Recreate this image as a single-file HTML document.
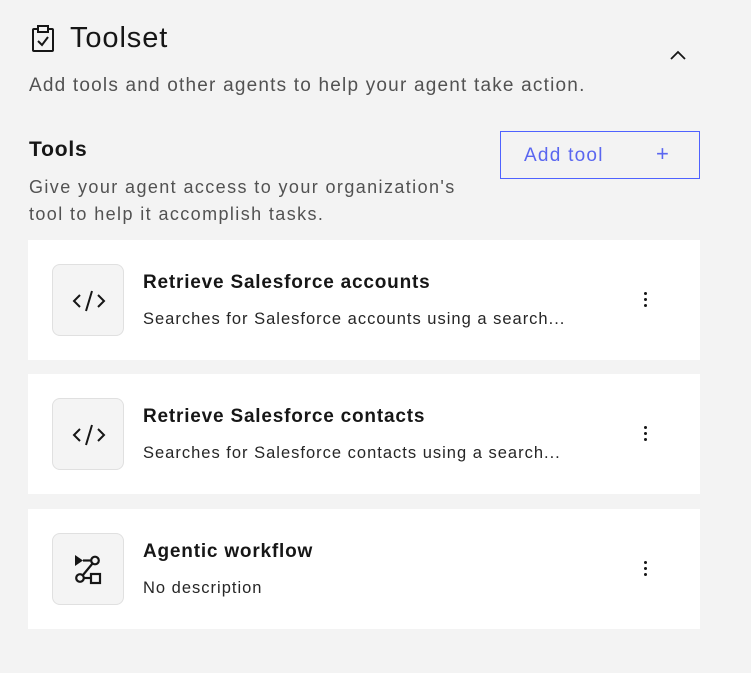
<!DOCTYPE html>
<html><head><meta charset="utf-8"><style>
body{margin:0;width:751px;height:673px;background:#f3f3f3;font-family:"Liberation Sans",sans-serif;color:#161616;position:relative;overflow:hidden}
.a{position:absolute}
.card{position:absolute;left:28px;width:672px;height:120px;background:#fff}
.ib{position:absolute;left:24px;top:24px;width:70px;height:70px;background:#f4f4f4;border:1px solid #e0e0e0;border-radius:8px}
.ib svg{position:absolute;left:19px;top:19px}
.t{position:absolute;left:115px;top:32px;font-size:19px;font-weight:bold;letter-spacing:0.8px}
.d{position:absolute;left:115px;top:70px;font-size:16.5px;color:#262626;letter-spacing:1px}
.k{position:absolute;left:616px;top:52px;width:3px}
.k i{display:block;width:3px;height:3px;border-radius:50%;background:#161616;margin-bottom:3px}
</style></head><body>
<svg class="a" style="left:31px;top:25px" width="24" height="28" viewBox="0 0 24 28" fill="none" stroke="#161616" stroke-width="2"><rect x="2" y="4" width="20" height="22" rx="1"/><rect x="7" y="1" width="10" height="6" fill="#f3f3f3"/><path d="M7 16l4 4 6-8"/></svg>
<div class="a" style="left:70px;top:22px;font-size:29px;letter-spacing:0.9px">Toolset</div>
<svg class="a" style="left:669px;top:50px" width="18" height="10" viewBox="0 0 18 10" fill="none" stroke="#161616" stroke-width="1.8"><path d="M2 9l7-7 7 7"/></svg>
<div class="a" style="left:29px;top:75px;font-size:19px;color:#525252;letter-spacing:1.2px">Add tools and other agents to help your agent take action.</div>
<div class="a" style="left:29px;top:138px;font-size:21px;font-weight:bold;letter-spacing:0.8px">Tools</div>
<div class="a" style="left:29px;top:174px;font-size:18px;color:#525252;line-height:27px;width:470px;letter-spacing:1.4px">Give your agent access to your organization's<br>tool to help it accomplish tasks.</div>
<div class="a" style="left:500px;top:131px;width:198px;height:46px;border:1px solid #4f62ff;color:#5a66f0;font-size:19px"><span class="a" style="left:23px;top:13px;letter-spacing:1.25px;white-space:nowrap">Add tool</span><span class="a" style="left:155px;top:9px;font-size:22px">+</span></div>

<div class="card" style="top:240px"><div class="ib"><svg width="34" height="34" viewBox="0 0 34 34" fill="none" stroke="#161616" stroke-width="2"><path d="M8 11l-6 6 6 6M26 11l6 6-6 6M20 7l-6 20"/></svg></div>
<div class="t">Retrieve Salesforce accounts</div><div class="d">Searches for Salesforce accounts using a search...</div><div class="k"><i></i><i></i><i></i></div></div>

<div class="card" style="top:374px"><div class="ib"><svg width="34" height="34" viewBox="0 0 34 34" fill="none" stroke="#161616" stroke-width="2"><path d="M8 11l-6 6 6 6M26 11l6 6-6 6M20 7l-6 20"/></svg></div>
<div class="t">Retrieve Salesforce contacts</div><div class="d">Searches for Salesforce contacts using a search...</div><div class="k"><i></i><i></i><i></i></div></div>

<div class="card" style="top:509px"><div class="ib"><svg style="left:21px;top:20px" width="32" height="32" viewBox="0 0 32 32" fill="none" stroke="#161616" stroke-width="2.2"><path d="M1 1v11l8-5.5z" fill="#161616" stroke="none"/><path d="M9 6.5h8"/><circle cx="21" cy="6.5" r="3.8"/><path d="M18.5 9.5L9 21"/><circle cx="6" cy="24" r="3.8"/><path d="M10 24h6"/><rect x="17" y="20" width="9" height="9"/></svg></div>
<div class="t">Agentic workflow</div><div class="d">No description</div><div class="k"><i></i><i></i><i></i></div></div>
</body></html>
